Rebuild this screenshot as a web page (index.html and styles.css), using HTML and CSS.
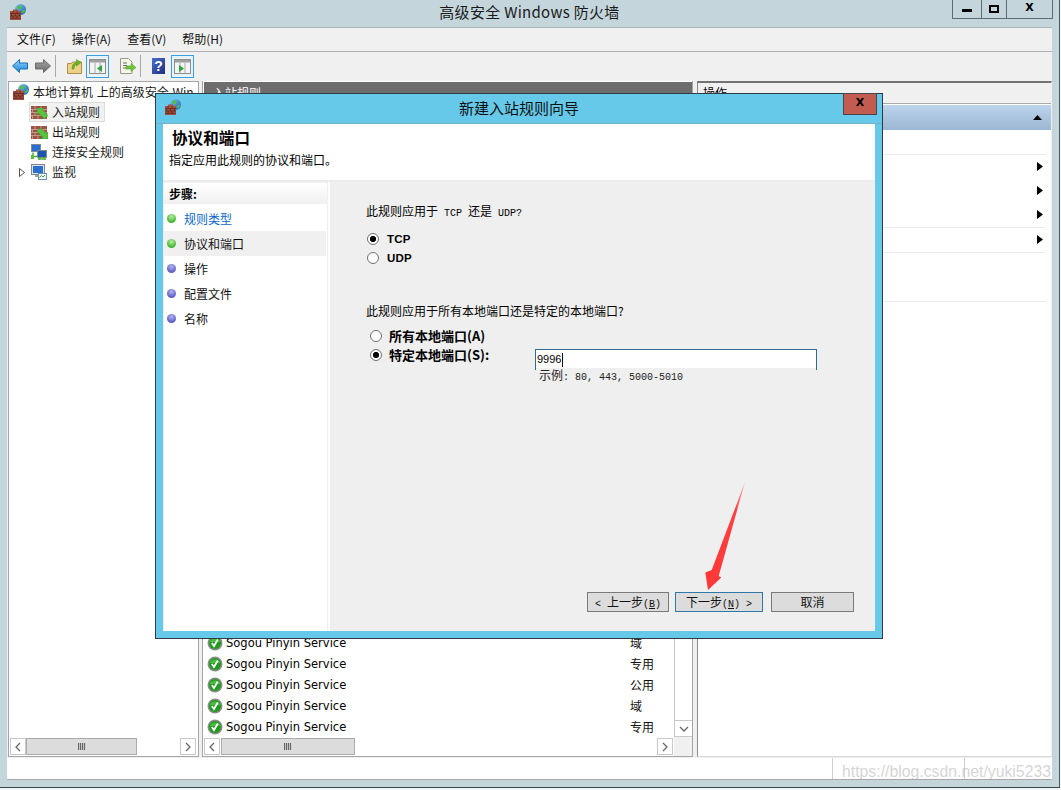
FILE: index.html
```html
<!DOCTYPE html>
<html lang="zh-CN">
<head>
  <meta charset="UTF-8" />
  <meta name="viewport" content="width=device-width, initial-scale=1.0" />
  <title>高级安全 Windows 防火墙</title>
  <link rel="stylesheet" href="styles.css">
</head>
<body>
  <!-- shared icons -->
  <svg class="defs" width="0" height="0">
    <defs>
      <linearGradient id="globe-fill" x1="0" y1="0" x2="1" y2="1">
        <stop offset="0" stop-color="#7cc4f0"/><stop offset="1" stop-color="#1b5fb0"/>
      </linearGradient>
      <linearGradient id="blue-arrow" x1="0" y1="0" x2="0" y2="1">
        <stop offset="0" stop-color="#8fd0fa"/><stop offset="1" stop-color="#1d86d8"/>
      </linearGradient>
      <linearGradient id="gray-arrow" x1="0" y1="0" x2="0" y2="1">
        <stop offset="0" stop-color="#a8a8a8"/><stop offset="1" stop-color="#6a6a6a"/>
      </linearGradient>
      <linearGradient id="help-fill" x1="0" y1="0" x2="1" y2="1">
        <stop offset="0" stop-color="#4a6fd0"/><stop offset="1" stop-color="#1c2f7c"/>
      </linearGradient>
      <symbol id="wall" viewBox="0 0 16 13">
        <rect width="16" height="13" fill="#9a5442"/>
        <path d="M0 3.500h16M0 6.500h16M0 9.500h16M4 0v3.500M10 0v3.500M1.500 3.500v3M7 3.500v3M13 3.500v3M4 6.500v3M10 6.500v3M1.500 9.500v3.500M7 9.500v3.500M13 9.500v3.500" stroke="#c9a999" stroke-width=".8" fill="none"/>
      </symbol>
      <symbol id="fw" viewBox="0 0 16 16">
        <circle cx="10.500" cy="5.500" r="5.500" fill="url(#globe-fill)"/>
        <path d="M7 2.500c2-1.500 4-1 5 .5l-1.500 2.500-2.500-.5zM12 7l2.500-1.500.5 2-2.500 2z" fill="#4fc04a"/>
        <path d="M0 7h3V5.500h5V7h3v9H0z" fill="#a5503c"/>
        <path d="M0 9.500h11M0 12h11M0 14.300h11M3 7v2.500M7 7v2.500M1.500 9.500V12M5.500 9.500V12M9.500 9.500V12M3 12v2.300M7 12v2.300" stroke="#5e2a20" stroke-width=".8" fill="none"/>
      </symbol>
      <symbol id="chk" viewBox="0 0 16 16">
        <circle cx="8" cy="8" r="7.500" fill="#8c8c8c"/>
        <circle cx="8" cy="8" r="6" fill="#1f9a1c"/>
        <path d="M2.500 7a6 6 0 0 1 11 0z" fill="#5fc956" opacity=".7"/>
        <path d="M4.800 8l2.200 3 3.800-6.500" stroke="#fff" stroke-width="1.800" fill="none"/>
      </symbol>
      <symbol id="pane" viewBox="0 0 17 15">
        <rect x=".5" y=".5" width="16" height="14" fill="#f4f4f4" stroke="#8d8d8d"/>
        <rect x="1" y="1" width="15" height="2.500" fill="#a0a0a0"/>
        <path d="M6 3.500V14.500M11 3.500V14.500" stroke="#aaa" fill="none"/>
      </symbol>
      <symbol id="grip" viewBox="0 0 8 7">
        <path d="M.5 0v7M2.500 0v7M4.500 0v7M6.500 0v7" stroke="#666" fill="none" stroke-width="1.200"/>
      </symbol>
      <symbol id="chev-l" viewBox="0 0 8 10"><path d="M6 1L2 5l4 4" stroke="#666" stroke-width="1.300" fill="none"/></symbol>
      <symbol id="chev-r" viewBox="0 0 8 10"><path d="M2 1l4 4-4 4" stroke="#666" stroke-width="1.300" fill="none"/></symbol>
      <symbol id="chev-d" viewBox="0 0 10 8"><path d="M1 2l4 4 4-4" stroke="#666" stroke-width="1.300" fill="none"/></symbol>
      <symbol id="tri-r" viewBox="0 0 6 9"><path d="M0 0l6 4.500L0 9z" fill="#000"/></symbol>
    </defs>
  </svg>

  <div class="window">
    <header class="titlebar">
      <svg class="ico16"><use href="#fw"/></svg>
      <div class="title">高级安全 Windows 防火墙</div>
      <div class="controls">
        <div class="ctl ctl-min"><span></span></div>
        <div class="ctl ctl-max"><span></span></div>
        <div class="ctl ctl-close">X</div>
      </div>
    </header>

    <div class="client">
      <nav class="menubar">
        <span>文件(F)</span><span>操作(A)</span><span>查看(V)</span><span>帮助(H)</span>
      </nav>

      <div class="toolbar">
        <svg class="tool tool-back" width="16" height="14" viewBox="0 0 16 14">
          <path d="M7.500.5L.5 7l7 6.500V10h8V4h-8z" fill="url(#blue-arrow)" stroke="#1a6fb4"/>
        </svg>
        <svg class="tool tool-fwd" width="16" height="14" viewBox="0 0 16 14">
          <path d="M8.500.5l7 6.500-7 6.500V10h-8V4h8z" fill="url(#gray-arrow)" stroke="#6a6a6a"/>
        </svg>
        <i class="tsep tsep-a"></i>
        <svg class="tool tool-up" width="15" height="16" viewBox="0 0 15 16">
          <path d="M.5 5.500h4l1-1.500h9v11.500H.5z" fill="#ecd188" stroke="#b08f45"/>
          <path d="M5 11c0-4 1.500-6 4.500-7V1.500L14 4.500 9.500 8V6C8 6.500 7 8.500 7 11z" fill="#6cb51f" stroke="#4b8a14" stroke-width=".5"/>
        </svg>
        <div class="toggle toggle-a">
          <svg width="17" height="15"><use href="#pane"/></svg>
          <svg class="toggle-mark" width="5" height="7" viewBox="0 0 5 7"><path d="M5 0v7L0 3.500z" fill="#2ea33a"/></svg>
        </div>
        <svg class="tool tool-doc" width="16" height="16" viewBox="0 0 16 16">
          <path d="M.5.500h8l3.500 3.500v11.500H.5z" fill="#f8f6e8" stroke="#9a9a88"/>
          <path d="M3 5h4M3 7.500h4M3 10h4" stroke="#6a6a6a" fill="none"/>
          <path d="M6 8h5V5.500L16 9.500 11 13.500V11H6z" fill="#6fc43c" stroke="#4a9a25" stroke-width=".5"/>
        </svg>
        <i class="tsep tsep-b"></i>
        <svg class="tool tool-help" width="13" height="16" viewBox="0 0 13 16">
          <rect width="13" height="16" fill="url(#help-fill)"/>
          <text x="6.500" y="13" text-anchor="middle" font-family="Liberation Sans" font-weight="700" font-size="14" fill="#fff">?</text>
        </svg>
        <div class="toggle toggle-b">
          <svg width="17" height="15"><use href="#pane"/></svg>
          <svg class="toggle-mark" width="5" height="7" viewBox="0 0 5 7"><path d="M0 0v7l5-3.500z" fill="#2ea33a"/></svg>
        </div>
      </div>

      <div class="panes">
        <aside class="pane pane-tree">
          <div class="tree">
            <div class="tree-row tree-root"><svg class="ico16"><use href="#fw"/></svg><span>本地计算机 上的高级安全 Win</span></div>
            <div class="tree-row tree-sel">
              <svg class="wall" width="16" height="13"><use href="#wall"/></svg>
              <svg class="wall-mark" width="11" height="11" viewBox="0 0 11 11"><path d="M0 0h7L5.500 2 11 7.500 7.500 11 2 5.500 0 7z" fill="#59c43e" stroke="#2f8f2a" stroke-width=".5"/></svg>
              <span>入站规则</span>
            </div>
            <div class="tree-row">
              <svg class="wall" width="16" height="13"><use href="#wall"/></svg>
              <svg class="wall-mark" width="11" height="11" viewBox="0 0 11 11"><path d="M11 11H4l1.500-2L0 3.500 3.500 0 9 5.500 11 4z" fill="#59c43e" stroke="#2f8f2a" stroke-width=".5"/></svg>
              <span>出站规则</span>
            </div>
            <div class="tree-row">
              <svg class="ico16" viewBox="0 0 16 16">
                <rect x=".5" y=".5" width="9" height="7" fill="#2a6fd0" stroke="#7d8a99"/>
                <rect x="6.500" y="6.500" width="9" height="7" fill="#1c55b0" stroke="#7d8a99"/>
                <path d="M8 14h6v2H8zM2 8.500v4h4" fill="none" stroke="#56a83c" stroke-width="1.500"/>
                <rect y="11" width="3" height="4" fill="#56c03c"/>
              </svg>
              <span>连接安全规则</span>
            </div>
            <div class="tree-row">
              <svg class="expander" width="6" height="9" viewBox="0 0 6 9"><path d="M.5.500l5 4-5 4z" fill="#fff" stroke="#555"/></svg>
              <svg class="ico16" viewBox="0 0 16 16">
                <rect x=".5" y=".5" width="13" height="10" fill="#dfe3e8" stroke="#80868c"/>
                <rect x="2" y="2" width="10" height="7" fill="#2a6fd0"/>
                <rect x="4" y="11" width="6" height="2" fill="#a0a4a8"/>
                <rect x="7.500" y="9.500" width="8" height="6" fill="#f2f6fa" stroke="#6d8fb0"/>
                <path d="M8.500 13.500l2-2 1.500 1.500 2-2" stroke="#3aa53a" fill="none"/>
              </svg>
              <span>监视</span>
            </div>
          </div>
          <div class="hscroll">
            <div class="sb-btn"><svg width="8" height="10"><use href="#chev-l"/></svg></div>
            <div class="sb-thumb sb-thumb-tree"><svg width="8" height="7"><use href="#grip"/></svg></div>
            <div class="sb-track"></div>
            <div class="sb-btn"><svg width="8" height="10"><use href="#chev-r"/></svg></div>
          </div>
        </aside>

        <main class="pane pane-rules">
          <div class="pane-head">入站规则</div>
          <div class="rules-body">
            <div class="rules">
              <div class="rule"><svg class="chk"><use href="#chk"/></svg><span class="rule-name">Sogou Pinyin Service</span><span class="rule-scope">域</span></div>
              <div class="rule"><svg class="chk"><use href="#chk"/></svg><span class="rule-name">Sogou Pinyin Service</span><span class="rule-scope">专用</span></div>
              <div class="rule"><svg class="chk"><use href="#chk"/></svg><span class="rule-name">Sogou Pinyin Service</span><span class="rule-scope">公用</span></div>
              <div class="rule"><svg class="chk"><use href="#chk"/></svg><span class="rule-name">Sogou Pinyin Service</span><span class="rule-scope">域</span></div>
              <div class="rule"><svg class="chk"><use href="#chk"/></svg><span class="rule-name">Sogou Pinyin Service</span><span class="rule-scope">专用</span></div>
            </div>
            <div class="vscroll">
              <div class="sb-track"></div>
              <div class="sb-btn sb-btn-v"><svg width="10" height="8"><use href="#chev-d"/></svg></div>
            </div>
            <div class="hscroll hscroll-rules">
              <div class="sb-btn"><svg width="8" height="10"><use href="#chev-l"/></svg></div>
              <div class="sb-thumb sb-thumb-rules"><svg width="8" height="7"><use href="#grip"/></svg></div>
              <div class="sb-track"></div>
              <div class="sb-btn"><svg width="8" height="10"><use href="#chev-r"/></svg></div>
            </div>
            <div class="sb-corner"></div>
          </div>
        </main>

        <aside class="pane pane-actions">
          <div class="actions-head">操作</div>
          <div class="actions-section"><svg width="9" height="5" viewBox="0 0 9 5"><path d="M0 5l4.500-5L9 5z" fill="#000"/></svg></div>
          <div class="action action-first"></div>
          <div class="action action-arrow"><svg width="6" height="9"><use href="#tri-r"/></svg></div>
          <div class="action action-arrow"><svg width="6" height="9"><use href="#tri-r"/></svg></div>
          <div class="action action-arrow action-last"><svg width="6" height="9"><use href="#tri-r"/></svg></div>
          <div class="action action-arrow action-last"><svg width="6" height="9"><use href="#tri-r"/></svg></div>
          <div class="action action-tall"></div>
        </aside>
      </div>

      <footer class="statusbar">
        <div class="status-cell status-main"></div>
        <div class="status-cell status-mid"></div>
        <div class="status-cell status-end"></div>
      </footer>
    </div>

    <!-- wizard window -->
    <section class="dialog">
      <div class="dialog-title">
        <svg class="dialog-icon"><use href="#fw"/></svg>
        <span>新建入站规则向导</span>
        <div class="dialog-close">X</div>
      </div>
      <div class="dialog-content">
        <div class="dialog-head">
          <h2>协议和端口</h2>
          <p>指定应用此规则的协议和端口。</p>
        </div>
        <div class="dialog-body">
          <div class="steps">
            <div class="steps-head">步骤:</div>
            <div class="step step-link"><i class="dot dot-done"></i>规则类型</div>
            <div class="step step-current"><i class="dot dot-done"></i>协议和端口</div>
            <div class="step"><i class="dot"></i>操作</div>
            <div class="step"><i class="dot"></i>配置文件</div>
            <div class="step"><i class="dot"></i>名称</div>
          </div>
          <div class="form">
            <p class="q q-proto">此规则应用于<span class="half"> TCP </span>还是<span class="half"> UDP?</span></p>
            <label class="opt opt-proto"><input type="radio" name="proto" checked><b class="opt-latin">TCP</b></label>
            <label class="opt opt-proto"><input type="radio" name="proto"><b class="opt-latin">UDP</b></label>
            <p class="q q-port">此规则应用于所有本地端口还是特定的本地端口?</p>
            <label class="opt opt-port"><input type="radio" name="port"><b>所有本地端口(A)</b></label>
            <div class="port-row">
              <label class="opt opt-port opt-specific"><input type="radio" name="port" checked><b>特定本地端口(S):</b></label>
              <div class="field">9996<i class="caret"></i></div>
            </div>
            <p class="hint">示例<span class="half">: 80, 443, 5000-5010</span></p>
            <div class="buttons">
              <button class="btn btn-back"><span class="half">&lt; </span>上一步<span class="half">(<u>B</u>)</span></button>
              <button class="btn btn-next">下一步<span class="half">(<u>N</u>) &gt;</span></button>
              <button class="btn btn-cancel">取消</button>
            </div>
          </div>
        </div>
      </div>
    </section>

    <!-- red annotation arrow -->
    <svg class="annot" width="50" height="112" viewBox="700 480 50 112">
      <defs>
        <linearGradient id="annot-fill" x1="1" y1="0" x2="0" y2="1">
          <stop offset="0" stop-color="#ffb0b0"/><stop offset=".25" stop-color="#ff4040"/><stop offset="1" stop-color="#ff3636"/>
        </linearGradient>
      </defs>
      <path d="M745 482L718.700 576l2.600 1.500L708 590l-2.700-17.500 6.400-2.500z" fill="url(#annot-fill)"/>
    </svg>

    <div class="watermark">https://blog.csdn.net/yuki5233</div>
  </div>
</body>
</html>
```

FILE: styles.css
```css
* { box-sizing: border-box; }
html, body { margin: 0; height: 100%; overflow: hidden; }
body { background: #f4f4f4; color: #000; font: 12px/18px "Noto Sans CJK SC", "Liberation Sans", sans-serif; }
p, h2 { margin: 0; }
svg { display: block; flex: none; }
.defs { position: absolute; }
.ico16 { width: 16px; height: 16px; }

.window { position: relative; width: 1060px; height: 788px; padding: 0 7px 7px; background: #c4d6dc; border-right: 1px solid #4d5a60; border-bottom: 1px solid #39454a; display: flex; flex-direction: column; }

/* main title bar */
.titlebar { height: 27px; flex: none; display: grid; grid-template-columns: 1fr auto 1fr; align-items: start; }
.titlebar > .ico16 { margin: 4px 0 0 3px; }
.title { font-size: 15px; line-height: 24px; letter-spacing: 0.3px; color: #1a1a1a; }
.controls { justify-self: end; margin-right: -1px; display: flex; height: 19px; border: 1px solid #5d6b72; border-top: 0; }
.ctl { display: flex; align-items: center; justify-content: center; font: 900 11px/16px "DejaVu Sans", sans-serif; }
.ctl + .ctl { border-left: 1px solid #5d6b72; }
.ctl-min { width: 28px; }
.ctl-min span { width: 10px; height: 3px; background: #000; margin-top: 3px; }
.ctl-max { width: 25px; }
.ctl-max span { width: 10px; height: 8px; border: 2px solid #000; margin-top: -1px; }
.ctl-close { width: 46px; padding-bottom: 3px; }

.client { flex: 1; display: flex; flex-direction: column; background: #f0f0f0; border-top: 1px solid #a9b5bb; min-height: 0; }

.menubar { height: 24px; flex: none; display: flex; gap: 16px; padding: 0 0 0 10px; border-bottom: 1px solid #aeb2b6; line-height: 22px; color: #111; }

.toolbar { height: 29px; flex: none; display: flex; align-items: center; padding: 0 0 1px 5px; }
.tool-fwd { margin-left: 7px; }
.tsep { width: 1px; height: 22px; background: #a8a8a8; }
.tsep-a { margin-left: 4px; }
.tool-up { margin-left: 11px; }
.toggle { position: relative; width: 23px; height: 23px; border: 1px solid #3aa0e0; background: #e8f2f9; display: flex; align-items: center; justify-content: center; }
.toggle-a { margin-left: 4px; }
.toggle-mark { position: absolute; left: 10px; top: 9px; }
.toggle-b .toggle-mark { left: 7px; }
.tool-doc { margin-left: 11px; }
.tsep-b { margin-left: 4px; }
.tool-help { margin-left: 11px; }
.toggle-b { margin-left: 6px; }

.panes { flex: 1; display: flex; min-height: 0; padding-left: 1px; }
.pane { background: #fff; display: flex; flex-direction: column; overflow: hidden; min-height: 0; border: 1px solid #a5a5a5; }
.pane-tree { width: 191px; }
.pane-rules { width: 491px; margin-left: 3px; border-top-width: 0; padding-top: 1px; }
.pane-actions { width: 355px; margin-left: 4px; border-color: #8c8c8c; border-right-color: #f0f0f0; border-bottom-color: #d8d8d8; border-top: 2px solid #737373; }

/* tree */
.tree { flex: 1; overflow: hidden; }
.tree-row { position: relative; height: 20px; display: flex; align-items: center; gap: 5px; padding-left: 22px; white-space: nowrap; color: #1a1a1a; }
.tree-root { padding-left: 4px; gap: 4px; word-spacing: 1px; }
.tree-sel { background: #f1f1f1; outline: 1px solid #dcdcdc; outline-offset: -1px; margin-left: 20px; padding-left: 2px; width: 76px; }
.wall { margin-top: 1px; }
.wall-mark { position: absolute; left: 28px; top: 6px; }
.tree-sel .wall-mark { left: 8px; }
.expander { position: absolute; left: 10px; top: 6px; }

/* scrollbars */
.hscroll { height: 19px; flex: none; display: flex; padding: 1px 2px 1px 1px; background: #fff; }
.hscroll-rules { padding-right: 1px; }
.sb-btn { width: 16px; border: 1px solid #c8c8c8; background: #fff; display: flex; align-items: center; justify-content: center; flex: none; }
.sb-track { flex: 1; background: #fff; }
.sb-thumb { flex: none; background: #dcdcdc; border: 1px solid #ababab; display: flex; align-items: center; justify-content: center; }
.sb-thumb-tree { width: 111px; }
.sb-thumb-rules { width: 134px; margin-left: 1px; }
.vscroll { display: flex; flex-direction: column; border-left: 1px solid #c8c8c8; }
.sb-btn-v { width: 17px; height: 17px; border-width: 1px 0; }
.sb-corner { background: #f0f0f0; }

/* middle pane */
.pane-head { height: 20px; flex: none; margin: 0 0 0 1px; padding-left: 9px; background: #6d6d6d; color: #fff; line-height: 21px; }
.rules-body { flex: 1; display: grid; grid-template-columns: 1fr 18px; grid-template-rows: 1fr 19px; min-height: 0; }
.rules { display: flex; flex-direction: column; justify-content: flex-end; padding: 0 0 0 4px; overflow: hidden; }
.rule { height: 21px; flex: none; display: flex; align-items: center; }
.chk { width: 16px; height: 16px; margin-right: 3px; }
.rule-name { width: 404px; font: 11.500px/18px "DejaVu Sans", sans-serif; }
.rule-scope { color: #111; }

/* right pane */
.actions-head { height: 21px; flex: none; padding-left: 5px; line-height: 20px; background: #f0f0f0; border-bottom: 1px solid #aaa; }
.actions-section { height: 25px; flex: none; margin-top: 1px; background: linear-gradient(#bcd3ea, #9cb7d5); display: flex; align-items: center; justify-content: flex-end; padding-right: 9px; }
.action { flex: none; height: 24px; margin-right: 5px; display: flex; align-items: center; justify-content: flex-end; padding-right: 3px; }
.action svg { margin-bottom: 2px; }
.action-first, .action-last, .action-tall { border-bottom: 1px solid #ececec; }
.action-first, .action-last { height: 25px; }
.action-tall { height: 49px; }

/* status bar */
.statusbar { height: 22px; flex: none; display: flex; padding-left: 1px; margin-top: 1px; background: #fff; border-bottom: 1px solid #a9a9a9; }
.status-cell { height: 100%; }
.status-main { width: 824px; }
.status-mid { width: 132px; border-left: 1px solid #cfcfcf; }
.status-end { flex: 1; border-left: 1px solid #cfcfcf; }
.watermark { position: absolute; left: 842px; top: 760px; white-space: nowrap; font: 15.800px/24px "Liberation Sans", sans-serif; color: rgba(170, 170, 170, .5); }

/* wizard */
.dialog { position: absolute; left: 155px; top: 93px; width: 728px; height: 546px; display: flex; flex-direction: column; background: #66c9ea; border: 1px solid #2e3b42; }
.dialog-title { position: relative; height: 30px; flex: none; text-align: center; font-size: 15px; line-height: 28px; color: #111; border-bottom: 1px solid #74b4ca; }
.dialog-icon { position: absolute; left: 9px; top: 5px; width: 16px; height: 16px; }
.dialog-close { position: absolute; right: 5px; top: -1px; width: 34px; height: 22px; background: #c25b50; border: 1px solid #47474a; font: 900 11px/17px "DejaVu Sans", sans-serif; color: #000; }
.dialog-content { flex: 1; display: flex; flex-direction: column; margin: 0 7px 7px; background: #fff; min-height: 0; }
.dialog-head { height: 58px; flex: none; padding: 2px 9px 0; border-bottom: 2px solid #ececec; }
.dialog-head h2 { font-size: 15.500px; font-weight: 700; line-height: 22px; letter-spacing: 0.1px; }
.dialog-head p { margin: 3px 0 0 -3px; line-height: 18px; }
.dialog-body { flex: 1; display: flex; gap: 2px; min-height: 0; }

.steps { width: 165px; flex: none; border: 1px solid #efefef; border-width: 0 1px 0 1px; }
.steps-head { height: 22px; padding-left: 5px; font-weight: 700; line-height: 21px; background: linear-gradient(#fff, #f0f0f0); border-top: 1px solid #f0f0f0; margin-bottom: 2px; }
.step { display: flex; align-items: center; height: 25px; padding-left: 3px; margin-right: 1px; gap: 8px; color: #111; }
.step-link { color: #0a66c8; }
.step-current { background: #f0f0f0; }
.dot { width: 9px; height: 9px; border-radius: 50%; background: radial-gradient(circle at 50% 30%, #b4b4ec, #5d5dc8 70%); }
.dot-done { background: radial-gradient(circle at 50% 30%, #b8ecaa, #43b52e 70%); }

.form { flex: 1; display: flex; flex-direction: column; background: #efefef; padding: 20px 21px 19px 36px; min-width: 0; }
.half { font: 10px/18px "Liberation Mono", monospace; white-space: pre; }
.opt { display: flex; align-items: center; height: 19px; }
.opt input { appearance: none; width: 12px; height: 12px; margin: 0; border: 1px solid #707070; border-radius: 50%; background: #fff; flex: none; }
.opt input:checked { background: radial-gradient(circle, #000 0 2.800px, #fff 3.300px); }
.opt-proto:first-of-type { margin-top: 6px; }
.opt-proto input { margin-right: 8px; margin-left: 1px; }
.opt-latin { font: 700 11.500px/18px "Liberation Sans", sans-serif; letter-spacing: 0.2px; }
.q-port { margin-top: 35px; }
.opt-port { padding-left: 4px; margin-top: 6px; }
.opt-port input { margin-right: 7px; }
.opt-port b { font-size: 13px; }
.port-row { display: flex; align-items: flex-start; }
.opt-specific { width: 169px; margin-top: 0; }
.field { position: relative; width: 282px; height: 21px; margin-top: 4px; padding-left: 1px; background: #fff; border: 1px solid #2e6a94; font: 11px/19px "Liberation Sans", sans-serif; display: flex; align-items: center; }
.caret { width: 1px; height: 14px; background: #111; margin-left: 1px; }
/* the hint's box covers the field's bottom edge, leaving only the corners */
.hint { position: relative; width: 280px; height: 12px; margin: -2px 0 0 170px; padding-left: 3px; background: #efefef; line-height: 14px; color: #222; }
.hint .half { line-height: 14px; }

.buttons { margin-top: auto; display: flex; justify-content: flex-end; }
.btn { height: 20px; padding: 0; background: #dcdcdc; border: 1px solid #7a7a7a; font: 12px/18px "Noto Sans CJK SC", sans-serif; color: #111; }
.btn-back { width: 82px; margin-right: 6px; }
.btn-next { width: 88px; margin-right: 8px; border-color: #2f78ac; }
.btn-cancel { width: 83px; }

.annot { position: absolute; left: 700px; top: 480px; }
```
